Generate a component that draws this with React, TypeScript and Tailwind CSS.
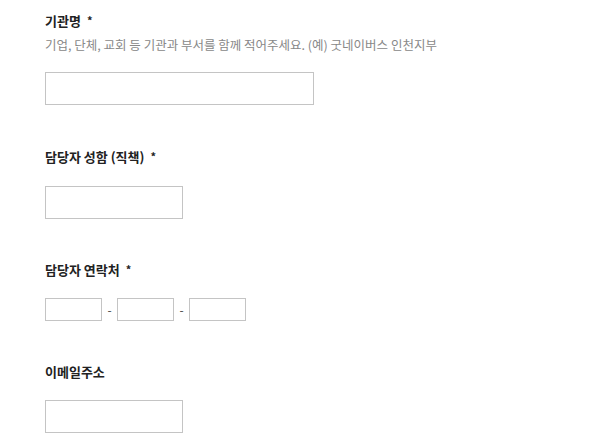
import React from "react";

const font = { fontFamily: '"Noto Sans CJK KR", "Noto Sans", sans-serif' };

function Label({ children, required }: { children: React.ReactNode; required?: boolean }) {
  return (
    <div className="text-[13px] leading-[18px] font-bold text-[#222222]">
      {children}
      {required && <span className="ml-[6px] text-[11px] align-[1px]">*</span>}
    </div>
  );
}

export default function App() {
  return (
    <div className="min-h-screen bg-white pl-[45px] pt-[11px]" style={font}>
      <section>
        <Label required>기관명</Label>
        <div className="mt-[7px] text-[12.5px] leading-[16px] text-[#888888]">
          기업, 단체, 교회 등 기관과 부서를 함께 적어주세요. (예) 굿네이버스 인천지부
        </div>
        <input className="mt-[19px] block w-[269px] h-[33px] border border-[#c4c4c4] bg-white outline-none" />
      </section>

      <section className="mt-[42px]">
        <Label required>담당자 성함 (직책)</Label>
        <input className="mt-[20px] block w-[138px] h-[33px] border border-[#c4c4c4] bg-white outline-none" />
      </section>

      <section className="mt-[41px]">
        <Label required>담당자 연락처</Label>
        <div className="mt-[19px] flex items-center">
          <input className="block w-[57px] h-[23px] border border-[#c4c4c4] bg-white outline-none" />
          <span className="w-[15px] text-center text-[12px] text-[#444444]">-</span>
          <input className="block w-[57px] h-[23px] border border-[#c4c4c4] bg-white outline-none" />
          <span className="w-[15px] text-center text-[12px] text-[#444444]">-</span>
          <input className="block w-[57px] h-[23px] border border-[#c4c4c4] bg-white outline-none" />
        </div>
      </section>

      <section className="mt-[42px]">
        <Label>이메일주소</Label>
        <input className="mt-[19px] block w-[138px] h-[33px] border border-[#c4c4c4] bg-white outline-none" />
      </section>
    </div>
  );
}
